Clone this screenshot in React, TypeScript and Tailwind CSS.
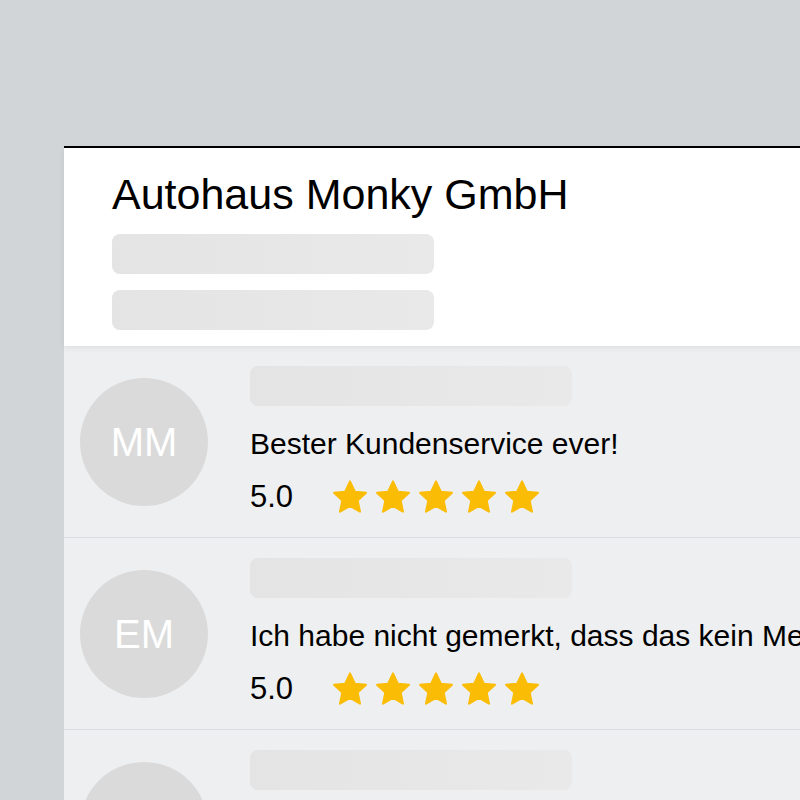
import React from "react";

const reviews = [
  { initials: "MM", text: "Bester Kundenservice ever!", rating: "5.0" },
  { initials: "EM", text: "Ich habe nicht gemerkt, dass das kein Mensch war!", rating: "5.0" },
  { initials: "JK", text: "Schnell, freundlich und kompetent.", rating: "5.0" },
];

function Star() {
  return (
    <svg viewBox="0 0 24 24" className="h-[40px] w-[40px] -mx-[3px]">
      <path
        d="M12 2.6l2.9 6.2 6.7.7-5 4.6 1.4 6.7L12 17.4l-6 3.4 1.4-6.7-5-4.6 6.7-.7z"
        fill="#fbbc05"
        stroke="#fbbc05"
        strokeWidth={1.2}
        strokeLinejoin="round"
      />
    </svg>
  );
}

function Bar() {
  return <div className="h-10 w-[322px] rounded-lg bg-gradient-to-r from-[#e4e4e4] to-[#e9e9e9]" />;
}

export default function App() {
  return (
    <div className="h-[800px] w-[800px] overflow-hidden bg-[#d1d5d8] pl-[64px] pt-[146px] font-['Liberation_Sans',Arial,sans-serif]">
      <div className="w-[800px] border-t-2 border-black bg-[#eeeff1]">
        {/* company header */}
        <div className="relative z-10 h-[198px] bg-white pl-[48px] pt-[22px] shadow-[0_2px_6px_rgba(0,0,0,0.07)]">
          <h1 className="text-[43px] leading-[48px] text-black">
            Autohaus Monky GmbH
          </h1>
          <div className="mt-[16px] flex flex-col gap-4">
            <Bar />
            <Bar />
          </div>
        </div>

        {reviews.map((r) => (
          <div
            key={r.initials}
            className="flex h-[192px] items-center gap-[42px] border-b border-[#d9dcdf] pl-[16px]"
          >
            <div className="flex h-[128px] w-[128px] shrink-0 items-center justify-center rounded-full bg-[#dadada] text-[40px] text-white">
              {r.initials}
            </div>
            <div className="flex h-full flex-col pt-[20px]">
              <Bar />
              <p className="mt-[22px] whitespace-nowrap text-[30px] leading-[32px] text-black">
                {r.text}
              </p>
              <div className="mt-[17px] flex h-10 items-center">
                <span className="w-[83px] text-[31px] text-black">{r.rating}</span>
                <div className="flex gap-[9px]">
                  <Star />
                  <Star />
                  <Star />
                  <Star />
                  <Star />
                </div>
              </div>
            </div>
          </div>
        ))}
      </div>
    </div>
  );
}
